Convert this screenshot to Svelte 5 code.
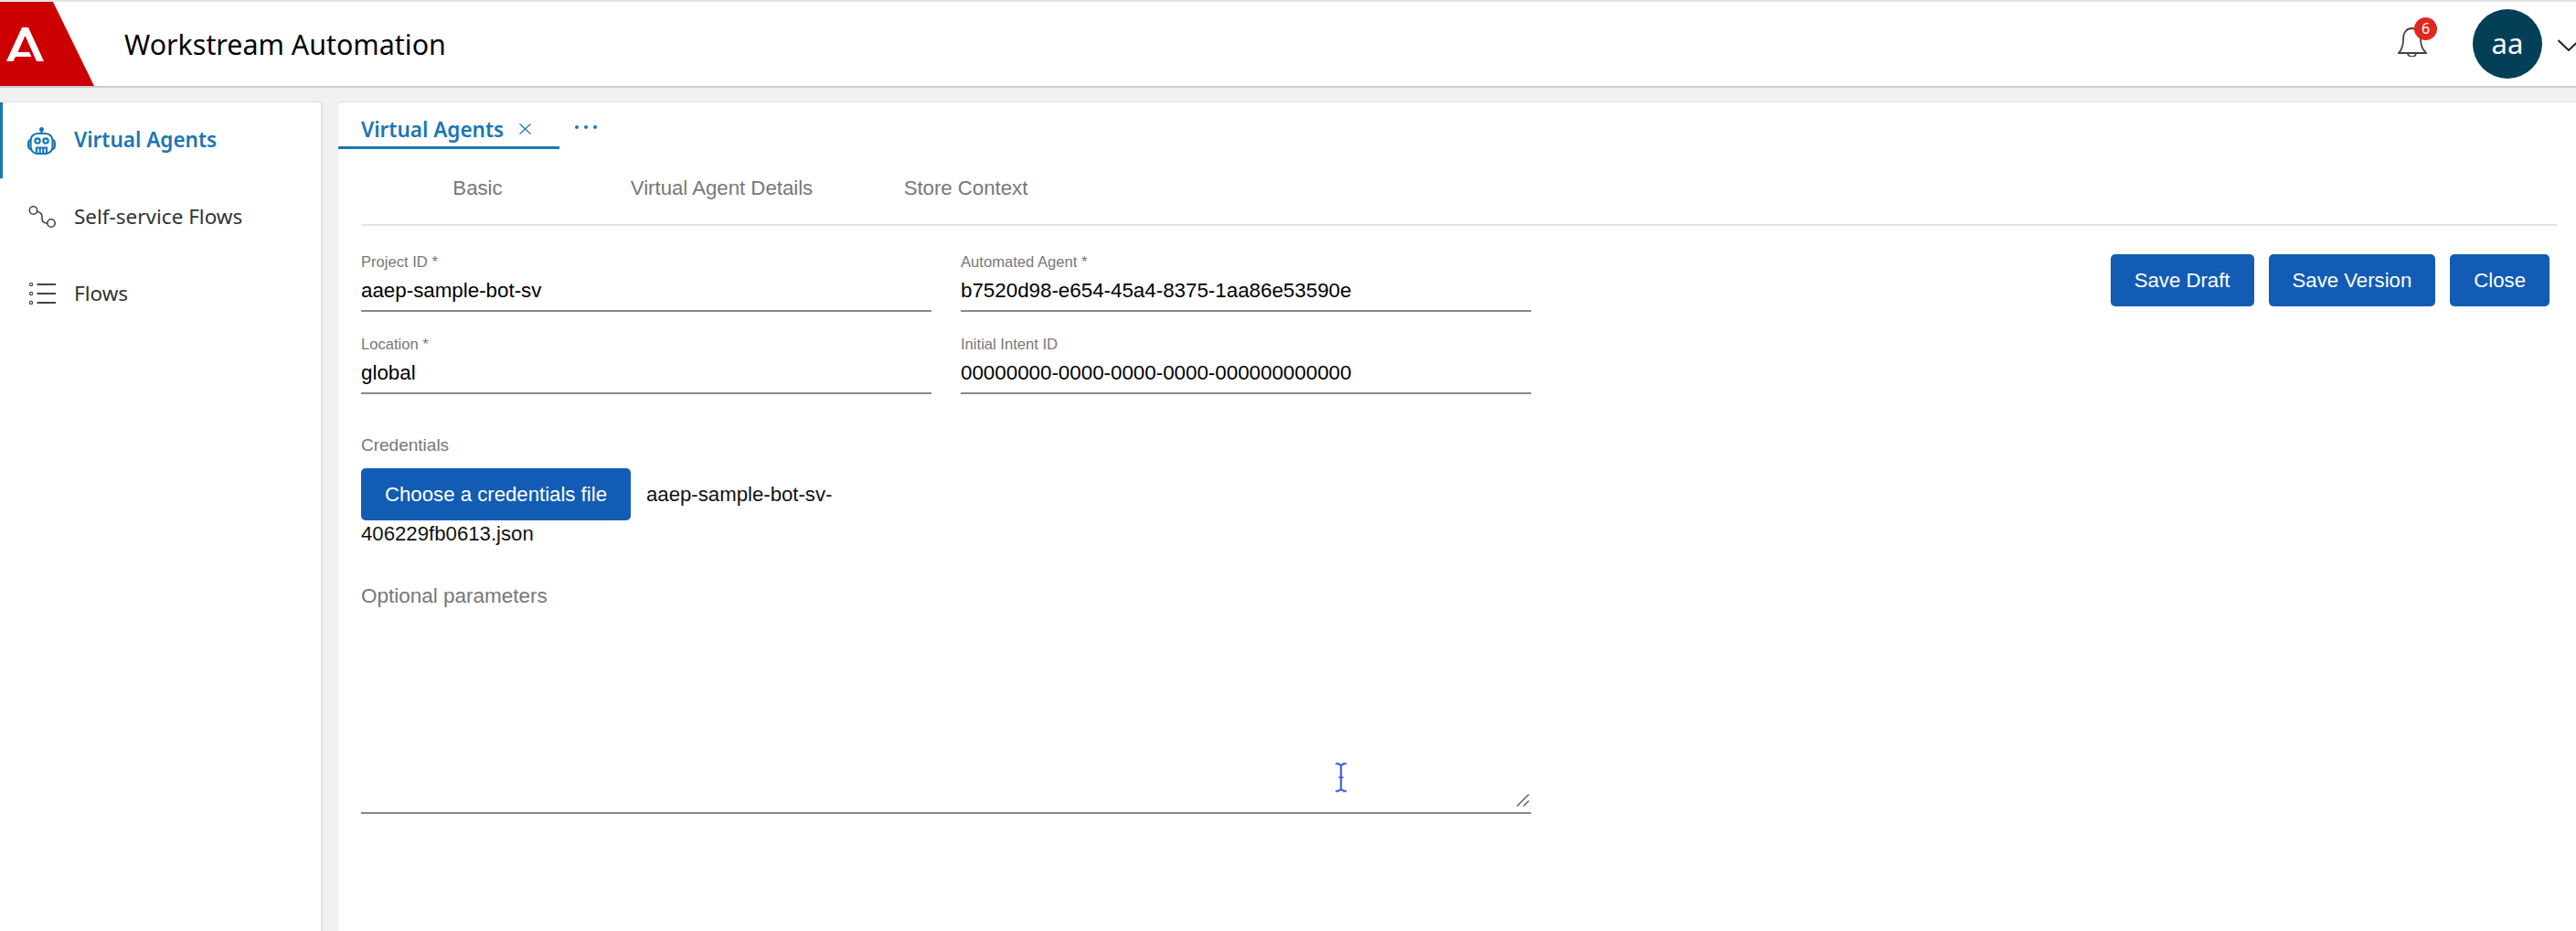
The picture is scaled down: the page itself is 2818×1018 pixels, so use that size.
<script>
	let navItems = [
		{ label: 'Virtual Agents', icon: 'robot', active: true },
		{ label: 'Self-service Flows', icon: 'flow', active: false },
		{ label: 'Flows', icon: 'list', active: false },
	]
	let subTabs = ['Basic', 'Virtual Agent Details', 'Store Context']
	let fields = [
		{ label: 'Project ID *', value: 'aaep-sample-bot-sv' },
		{ label: 'Automated Agent *', value: 'b7520d98-e654-45a4-8375-1aa86e53590e' },
		{ label: 'Location *', value: 'global' },
		{ label: 'Initial Intent ID', value: '00000000-0000-0000-0000-000000000000' },
	]
	let actions = ['Save Draft', 'Save Version', 'Close']
</script>

<div class="page">
	<header class="topbar">
		<svg class="logo" viewBox="0 0 103 92" width="103" height="92">
			<polygon points="0,0 58,0 103,92 0,92" fill="#cc0000" />
			<path d="M7 65 L24 28 H31 L48 65 H40 L27.5 37 L19.5 55 H32 L34.5 60 H17 L14.5 65 Z" fill="#fff" />
		</svg>
		<div class="title">Workstream Automation</div>
		<div class="bell">
			<svg viewBox="0 0 32 32" width="32" height="32" fill="none" stroke="#444" stroke-width="1.8">
				<path d="M1 28 C5 24 6 20 6 13 C6 5 10 1 15.5 1 C21 1 25 5 25 13 C25 20 27 24 31 28 Z" />
				<path d="M11 28 a4.5 4 0 0 0 9 0" />
			</svg>
			<span class="badge">6</span>
		</div>
		<div class="avatar">aa</div>
		<svg class="chevron" viewBox="0 0 24 13" width="24" height="13" fill="none" stroke="#222" stroke-width="2">
			<path d="M0.5 1 L12 12 L23.5 1" />
		</svg>
	</header>

	<div class="main">
		<nav class="sidebar">
			{#each navItems as item}
				<div class="nav-item" class:active={item.active}>
					<span class="nav-icon">
						{#if item.icon === 'robot'}
							<svg viewBox="0 0 31 30" width="31" height="30" fill="none" stroke="#1a76b4" stroke-width="2.2">
								<circle cx="15.5" cy="2.5" r="2.5" fill="#1a76b4" stroke="none" />
								<path d="M15.5 4 V7" />
								<rect x="3.5" y="7" width="24" height="22" rx="7.5" />
								<path d="M3.5 14 C1.5 14 1 16 1 19 C1 22 1.5 24 3.5 24 M27.5 14 C29.5 14 30 16 30 19 C30 22 29.5 24 27.5 24" />
								<circle cx="11" cy="15" r="2.7" />
								<circle cx="20" cy="15" r="2.7" />
								<path d="M10 29 V22.5 H21 V29 M13.7 22.5 V29 M17.3 22.5 V29" />
							</svg>
						{:else if item.icon === 'flow'}
							<svg viewBox="0 0 30 24" width="30" height="24" fill="none" stroke="#444" stroke-width="1.6">
								<circle cx="5.5" cy="5" r="4.2" />
								<circle cx="25" cy="19" r="4.2" />
								<path d="M9.5 6.5 C13 7 15 9 15 12 V14 C15 17.5 17 19 20.8 19" />
							</svg>
						{:else}
							<svg viewBox="0 0 30 24" width="30" height="24" fill="none" stroke="#444">
								<circle cx="3" cy="2" r="1.6" stroke-width="1.2" />
								<circle cx="3" cy="12" r="1.6" stroke-width="1.2" />
								<circle cx="3" cy="22" r="1.6" stroke-width="1.2" />
								<path d="M9.5 2 H30 M9.5 12 H30 M9.5 22 H30" stroke-width="2" />
							</svg>
						{/if}
					</span>
					<span class="nav-label">{item.label}</span>
				</div>
			{/each}
		</nav>

		<section class="content">
			<div class="tabbar">
				<div class="tab">
					<span>Virtual Agents</span>
					<svg viewBox="0 0 13 12" width="13" height="12" stroke="#1a76b4" stroke-width="1.2">
						<path d="M0.5 0.5 L12.5 11.5 M12.5 0.5 L0.5 11.5" />
					</svg>
				</div>
				<svg class="more" viewBox="0 0 24 4" width="24" height="4" fill="#1a76b4">
					<circle cx="2" cy="2" r="2" />
					<circle cx="12" cy="2" r="2" />
					<circle cx="22" cy="2" r="2" />
				</svg>
			</div>

			<div class="subtabs">
				{#each subTabs as t}
					<div class="subtab">{t}</div>
				{/each}
			</div>
			<div class="divider"></div>

			<div class="body">
				<div class="form">
					<div class="grid">
						{#each fields as f}
							<div class="field">
								<div class="field-label">{f.label}</div>
								<div class="field-value">{f.value}</div>
							</div>
						{/each}
					</div>
					<div class="cred-label">Credentials</div>
					<div class="cred-row">
						<span class="btn file-btn">Choose a credentials file</span><span>aaep-sample-bot-sv-</span><span>406229fb0613.json</span>
					</div>
					<div class="textarea">
						Optional parameters
						<svg class="cursor" viewBox="0 0 20 36" width="20" height="36" fill="none">
							<path d="M4 3 H7 L10 5 L13 3 H16 M10 5 V31 M4 33 H7 L10 31 L13 33 H16 M7.5 18 H12.5" stroke="#ccc" stroke-width="4" opacity="0.5" />
							<path d="M4 3 H7 L10 5 L13 3 H16 M10 5 V31 M4 33 H7 L10 31 L13 33 H16 M7.5 18 H12.5" stroke="#2a4bf0" stroke-width="1.6" />
						</svg>
						<svg class="handle" viewBox="0 0 14 14" width="14" height="14" stroke="#555" stroke-width="1.4">
							<path d="M0.5 13.5 L13.5 0.5 M7.5 13.5 L13.5 7.5" />
						</svg>
					</div>
				</div>
				<div class="actions">
					{#each actions as a}
						<span class="btn">{a}</span>
					{/each}
				</div>
			</div>
		</section>
	</div>
</div>

<style>
	:global(body) {
		background: #f1f1f1;
	}

	.page {
		height: 1018px;
		overflow: hidden;
		display: flex;
		flex-direction: column;
		font-family: "Noto Sans", sans-serif;
	}

	.topbar {
		height: 92px;
		flex: none;
		display: flex;
		align-items: center;
		background: #fff;
		border-top: 2px solid #e5e5e5;
		border-bottom: 2px solid #cccccc;
		overflow: hidden;
	}
	.logo {
		flex: none;
		display: block;
	}
	.title {
		margin-left: 33px;
		font-size: 30.4px;
		color: #000;
		flex: 1;
	}
	.bell {
		position: relative;
		width: 32px;
		height: 32px;
		margin-top: -4px;
		margin-right: 50px;
		flex: none;
	}
	.bell svg {
		display: block;
	}
	.badge {
		position: absolute;
		left: 18px;
		top: -11px;
		width: 25px;
		height: 25px;
		border-radius: 50%;
		background: #e0281e;
		color: #fff;
		font-size: 16px;
		line-height: 25px;
		text-align: center;
	}
	.avatar {
		width: 76px;
		height: 76px;
		flex: none;
		border-radius: 50%;
		background: #033f57;
		color: #fff;
		font-size: 31px;
		line-height: 74px;
		text-align: center;
	}
	.chevron {
		flex: none;
		margin-left: 17px;
		margin-right: -4px;
		margin-top: 2px;
	}

	.main {
		flex: 1;
		display: flex;
		gap: 17px;
		padding-top: 15px;
		min-height: 0;
	}

	.sidebar {
		width: 351px;
		flex: none;
		background: #fff;
		border-top: 1px solid #e0e0e0;
		border-right: 2px solid #e0e0e0;
		border-top-right-radius: 5px;
	}
	.nav-item {
		height: 84px;
		display: flex;
		align-items: center;
		gap: 20px;
		padding-left: 30px;
		font-size: 22.5px;
		color: #333;
	}
	.nav-label {
		margin-top: -2px;
	}
	.nav-item.active {
		height: 83px;
		padding-left: 27px;
		border-left: 3px solid #1a76b4;
		color: #1a76b4;
		font-weight: 600;
	}
	.nav-icon {
		width: 31px;
		display: flex;
		justify-content: center;
	}

	.content {
		flex: 1;
		background: #fff;
		border-top: 1px solid #e0e0e0;
		border-top-left-radius: 5px;
	}

	.tabbar {
		height: 51px;
		display: flex;
	}
	.tab {
		width: 242px;
		box-sizing: border-box;
		padding-left: 25px;
		padding-top: 10px;
		display: flex;
		align-items: center;
		gap: 17px;
		border-bottom: 3px solid #1a76b4;
		color: #1a76b4;
		font-size: 22.5px;
		font-weight: 600;
	}
	.more {
		margin-left: 17px;
		margin-top: 25px;
	}

	.subtabs {
		height: 78px;
		padding-top: 4px;
		padding-left: 19px;
		display: flex;
		align-items: center;
		font-family: "Liberation Sans", Arial, sans-serif;
		font-size: 22.2px;
		color: #777;
	}
	.subtab {
		width: 267px;
		text-align: center;
	}
	.divider {
		height: 2px;
		margin-left: 25px;
		margin-right: 21px;
		background: #e4e4e4;
	}

	.body {
		display: flex;
		justify-content: space-between;
		padding: 30px 29px 0 25px;
		font-family: "Liberation Sans", Arial, sans-serif;
	}
	.form {
		width: 1280px;
	}
	.grid {
		display: grid;
		grid-template-columns: 624px 624px;
		column-gap: 32px;
		row-gap: 26px;
	}
	.field-label {
		font-size: 16.6px;
		line-height: 20px;
		color: #777;
		margin-bottom: 6px;
	}
	.field-value {
		font-size: 22.35px;
		line-height: 30px;
		color: #000;
		padding-bottom: 6px;
		border-bottom: 2px solid #888;
	}

	.cred-label {
		margin-top: 45px;
		margin-bottom: 14px;
		font-size: 19px;
		line-height: 22px;
		color: #777;
	}
	.cred-row {
		width: 624px;
		font-size: 22.2px;
		line-height: 29px;
		color: #111;
	}
	.btn {
		display: inline-block;
		box-sizing: border-box;
		height: 57px;
		line-height: 57px;
		padding: 0 26px;
		border-radius: 5px;
		background: #135cb5;
		color: #fff;
		font-size: 22.2px;
	}
	.file-btn {
		margin-right: 17px;
	}

	.textarea {
		position: relative;
		box-sizing: border-box;
		height: 253px;
		margin-top: 39px;
		font-size: 22.5px;
		line-height: 30px;
		color: #777;
		border-bottom: 2px solid #888;
	}
	.cursor {
		position: absolute;
		left: 1062px;
		top: 195px;
	}
	.handle {
		position: absolute;
		right: 2px;
		bottom: 6px;
	}

	.actions {
		display: flex;
		gap: 16px;
		margin-top: 1px;
		align-self: flex-start;
	}
</style>
